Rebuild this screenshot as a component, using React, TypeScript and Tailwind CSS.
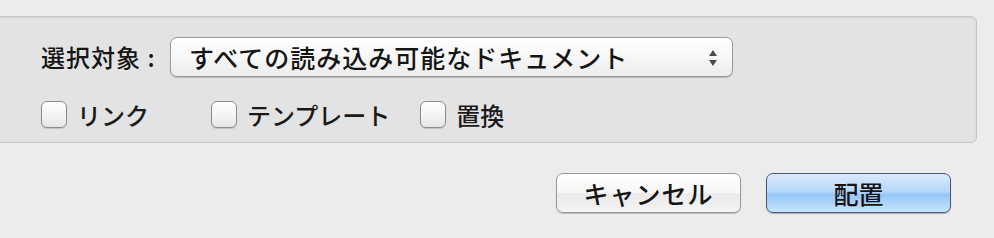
import React from 'react';

// チェックボックス（Aqua風）
function AquaCheck({ label, className = '' }: { label: string; className?: string }) {
  return (
    <label className={`flex items-center gap-[10px] ${className}`}>
      <span className="block w-[26px] h-[27px] rounded-[6px] border border-[#8c8c8c] bg-[linear-gradient(to_bottom,#ffffff,#f2f2f2_60%,#e6e6e6)] shadow-[0_1px_1px_rgba(0,0,0,0.15)]" />
      <span className="text-[24px] leading-none text-[#1a1a1a] font-medium">{label}</span>
    </label>
  );
}

export default function App() {
  return (
    <div className="w-[994px] h-[238px] bg-[#ececec] overflow-hidden font-['Hiragino_Kaku_Gothic_Pro','Noto_Sans_CJK_JP',sans-serif] text-[#151515]">
      {/* 上部パネル */}
      <div className="mt-[16px] ml-[-10px] w-[987px] h-[127px] bg-[#e3e3e3] border border-[#c6c6c6] rounded-r-[6px] shadow-[inset_0_1px_2px_rgba(0,0,0,0.08)] pl-[50px] pt-[20px]">
        <div className="flex items-center h-[40px]">
          <span className="text-[24px] leading-none tracking-[1px] w-[129px] font-medium">選択対象 :</span>
          <div className="relative flex items-center w-[563px] h-[40px] rounded-[7px] border border-[#9b9b9b] bg-[linear-gradient(to_bottom,#ffffff,#f7f7f7_50%,#ececec)] shadow-[0_1px_1px_rgba(0,0,0,0.2)] pl-[18px]">
            <span className="text-[25px] leading-none tracking-[1px] font-medium">すべての読み込み可能なドキュメント</span>
            <svg className="absolute right-[14px] top-[11px]" width="10" height="18" viewBox="0 0 10 18">
              <path d="M5 1 L9 7 L1 7 Z" fill="#4a4a4a" />
              <path d="M5 17 L9 11 L1 11 Z" fill="#4a4a4a" />
            </svg>
          </div>
        </div>
        <div className="flex items-center mt-[24px]">
          <AquaCheck label="リンク" />
          <AquaCheck label="テンプレート" className="ml-[62px]" />
          <AquaCheck label="置換" className="ml-[30px]" />
        </div>
      </div>

      {/* ボタン */}
      <div className="flex justify-end gap-[25px] pr-[43px] mt-[30px]">
        <button className="w-[185px] h-[40px] rounded-[7px] border border-[#9a9a9a] bg-[linear-gradient(to_bottom,#ffffff,#f6f6f6_50%,#eaeaea_52%,#f4f4f4)] shadow-[0_1px_1px_rgba(0,0,0,0.2)] text-[25px] leading-none tracking-[1px] font-medium">
          キャンセル
        </button>
        <button className="w-[185px] h-[40px] rounded-[7px] border border-[#4d5677] bg-[linear-gradient(to_bottom,#d9e9fc,#b8d8f9_45%,#95c6f5_55%,#c6e5ff)] shadow-[0_1px_1px_rgba(0,0,0,0.25)] text-[25px] leading-none font-medium">
          配置
        </button>
      </div>
    </div>
  );
}
